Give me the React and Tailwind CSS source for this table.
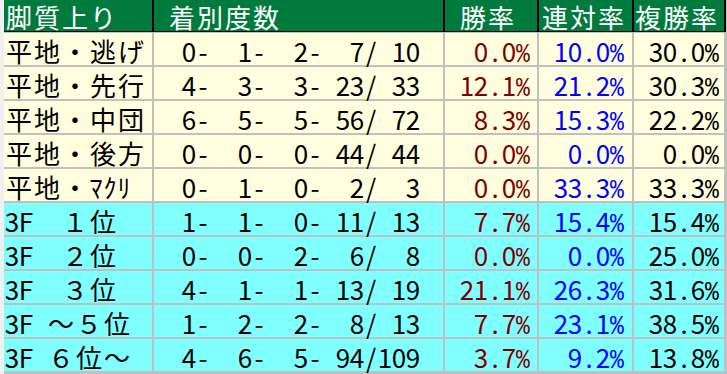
import React from 'react';

const rows = [
    { label: '平地・逃げ', count: '  0-  1-  2-  7/ 10', win: '0.0%', place: '10.0%', show: '30.0%', bg: 'bg-[#ffffe0]' },
    { label: '平地・先行', count: '  4-  3-  3- 23/ 33', win: '12.1%', place: '21.2%', show: '30.3%', bg: 'bg-[#ffffe0]' },
    { label: '平地・中団', count: '  6-  5-  5- 56/ 72', win: '8.3%', place: '15.3%', show: '22.2%', bg: 'bg-[#ffffe0]' },
    { label: '平地・後方', count: '  0-  0-  0- 44/ 44', win: '0.0%', place: '0.0%', show: '0.0%', bg: 'bg-[#ffffe0]' },
    { label: '平地・ﾏｸﾘ', count: '  0-  1-  0-  2/  3', win: '0.0%', place: '33.3%', show: '33.3%', bg: 'bg-[#ffffe0]' },
    { label: '3F　１位', count: '  1-  1-  0- 11/ 13', win: '7.7%', place: '15.4%', show: '15.4%', bg: 'bg-[#80ffff]' },
    { label: '3F　２位', count: '  0-  0-  2-  6/  8', win: '0.0%', place: '0.0%', show: '25.0%', bg: 'bg-[#80ffff]' },
    { label: '3F　３位', count: '  4-  1-  1- 13/ 19', win: '21.1%', place: '26.3%', show: '31.6%', bg: 'bg-[#80ffff]' },
    { label: '3F ～５位', count: '  1-  2-  2-  8/ 13', win: '7.7%', place: '23.1%', show: '38.5%', bg: 'bg-[#80ffff]' },
    { label: '3F ６位～', count: '  4-  6-  5- 94/109', win: '3.7%', place: '9.2%', show: '13.8%', bg: 'bg-[#80ffff]' },
];

// fixed cells per character, like the old bitmap gothic: half width 14px, full width 28px
const isHalf = (ch) => /[\x00-\x7f\uff61-\uff9f]/.test(ch);

const Mono = ({ text }) => (
    <span className="flex leading-[28px]">
        {Array.from(text).map((ch, i) => (
            <span
                key={i}
                className={`flex justify-center shrink-0 ${isHalf(ch) ? 'w-[14px]' : 'w-[28px]'}`}
            >
                {ch === '%'
                    ? <span className="inline-block font-['Liberation_Mono',monospace] text-[23px] leading-[28px] scale-y-[1.2] translate-y-[4px]">%</span>
                    : ch}
            </span>
        ))}
    </span>
);

const cols = 'grid grid-cols-[148px_289px_92px_93px_90px] gap-x-[2px]';

export default function App() {
    return (
        <div className="w-[727px] h-[374px] bg-[#c0c0c0] flex overflow-hidden font-['Noto_Sans_CJK_JP',sans-serif] text-[26px]">
            <div className="w-[4px] shrink-0 bg-[#f0f0f0]" />
            <div className="flex flex-col">
                {/* header */}
                <div className="w-[722px] bg-black pb-[1px]">
                    <div className={`${cols} text-white`}>
                        <div className="h-[31px] bg-[#007a3d] flex items-center pl-[1px] pt-[2px]"><Mono text="脚質上り" /></div>
                        <div className="h-[31px] bg-[#007a3d] flex items-center pt-[2px]"><Mono text=" 着別度数" /></div>
                        <div className="h-[31px] bg-[#007a3d] flex items-center pt-[2px]"><Mono text=" 勝率" /></div>
                        <div className="h-[31px] bg-[#007a3d] flex items-center pl-[2px] pt-[2px]"><Mono text="連対率" /></div>
                        <div className="h-[31px] bg-[#007a3d] flex items-center pt-[2px]"><Mono text="複勝率" /></div>
                    </div>
                </div>

                {/* body */}
                <div className={`${cols} gap-y-[2px] pt-[1px]`}>
                    {rows.map((r) => (
                        <React.Fragment key={r.label}>
                            <div className={`h-[32px] ${r.bg} flex items-center pl-[1px] pt-[3px] text-black`}><Mono text={r.label} /></div>
                            <div className={`h-[32px] ${r.bg} flex items-center pt-[3px] text-black`}><Mono text={r.count} /></div>
                            <div className={`h-[32px] ${r.bg} flex items-center justify-end pr-[7px] pt-[3px] text-[#800000]`}><Mono text={r.win} /></div>
                            <div className={`h-[32px] ${r.bg} flex items-center justify-end pr-[8px] pt-[3px] text-[#0000ff]`}><Mono text={r.place} /></div>
                            <div className={`h-[32px] ${r.bg} flex items-center justify-end pr-[5px] pt-[3px] text-black`}><Mono text={r.show} /></div>
                        </React.Fragment>
                    ))}
                </div>
            </div>
        </div>
    );
}
